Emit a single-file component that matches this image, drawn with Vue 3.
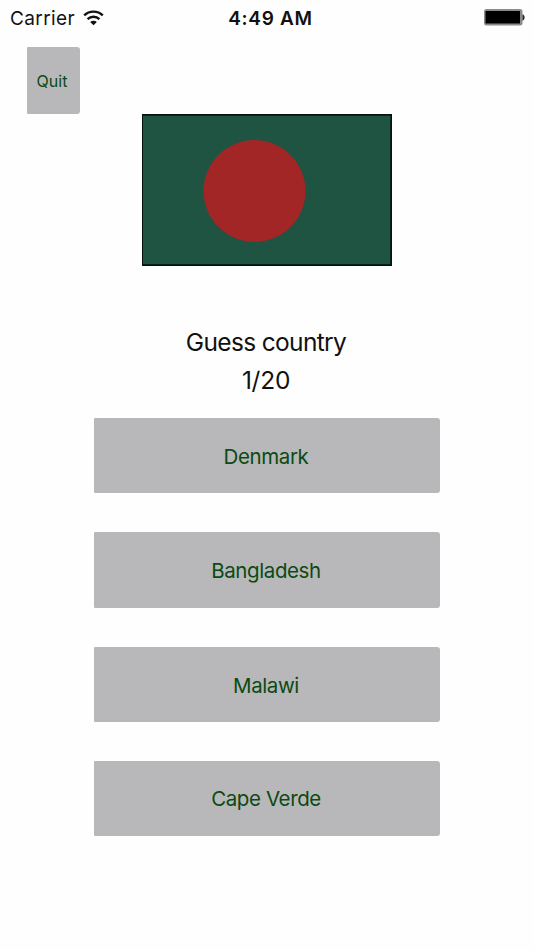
<template>
  <div class="screen">
    <header class="status-bar">
      <div class="status-left">
        <span class="carrier">Carrier</span>
        <svg class="wifi" width="21" height="17" viewBox="0 0 21 17">
          <g fill="none" stroke="#111" stroke-width="2.4">
            <path d="M1.2 5.3a13.6 13.6 0 0 1 18.6 0" />
            <path d="M4.6 9.1a8.6 8.6 0 0 1 11.8 0" />
          </g>
          <path fill="#111" d="M10.5 15.3 7.2 12a4.7 4.7 0 0 1 6.6 0z" />
        </svg>
      </div>
      <span class="clock">4:49 AM</span>
      <div class="status-right">
        <svg class="battery" width="42" height="18" viewBox="0 0 42 18">
          <rect x="0" y="0" width="38.5" height="16.5" rx="2.5" fill="#8a8a8a" />
          <rect x="1.5" y="2" width="34.5" height="12.5" rx="0.5" fill="#000" />
          <path d="M38.5 5.2c2.8 1 2.8 5.5 0 6.5z" fill="#222" />
        </svg>
      </div>
    </header>

    <button class="quit-button">Quit</button>

    <svg class="flag" width="250" height="152" viewBox="0 0 250 152">
      <rect width="250" height="152" fill="#07120f" />
      <rect x="1" y="1.7" width="247.3" height="148.5" fill="#1f5342" />
      <circle cx="112.5" cy="77" r="51" fill="#a32626" />
    </svg>

    <div class="question">
      <p class="title">Guess country</p>
      <p class="progress">{{ current }}/{{ total }}</p>
    </div>

    <div class="answers">
      <button v-for="country in countries"
              :key="country"
              class="answer-button">
        <span>{{ country }}</span>
      </button>
    </div>
  </div>
</template>

<script setup>
import { ref } from 'vue'

const current = ref(1)
const total = 20
const countries = ['Denmark', 'Bangladesh', 'Malawi', 'Cape Verde']
</script>

<style>
body {
  margin: 0;
  background: #fefefe;
}
</style>

<style scoped>
.screen {
  display: flex;
  flex-direction: column;
  width: 534px;
  height: 950px;
  overflow: hidden;
  background: #fefefe;
  color: #111;
  font-family: Inter, "Liberation Sans", sans-serif;
}

button {
  padding: 0;
  border: none;
  background: #b8b8ba;
  color: #0b4a12;
  font-family: inherit;
}

.status-bar {
  display: grid;
  grid-template-columns: 1fr auto 1fr;
  align-items: center;
  height: 36px;
  padding: 0 8px 0 10px;
  font-size: 19px;
}

.status-left {
  display: flex;
  align-items: center;
  gap: 8px;
}

.carrier {
  letter-spacing: 0.4px;
}

.clock {
  margin-left: 5px;
  font-weight: 600;
  letter-spacing: 0.7px;
}

.status-right {
  display: flex;
  justify-content: flex-end;
}

.quit-button {
  width: 53px;
  height: 67px;
  margin: 11px 0 0 27px;
  padding-right: 3px;
  border-radius: 1px 3px 3px 1px;
  font-size: 16px;
}

.flag {
  display: block;
  margin-left: 142px;
}

.question {
  margin-top: 57px;
  padding-right: 2px;
  text-align: center;
  font-size: 24.5px;
}

.question p {
  margin: 0;
  line-height: 38px;
}

.title {
  letter-spacing: -0.65px;
}

.progress {
  letter-spacing: -0.25px;
}

.answers {
  display: grid;
  grid-template-rows: 75px 76.5px 75px 75px;
  row-gap: 38.8px;
  width: 346px;
  margin: 19px 0 0 94px;
}

.answer-button {
  padding: 1px 2px 0 0;
  border-radius: 1px 3px 3px 1px;
  font-size: 20.5px;
  letter-spacing: -0.4px;
}
</style>
